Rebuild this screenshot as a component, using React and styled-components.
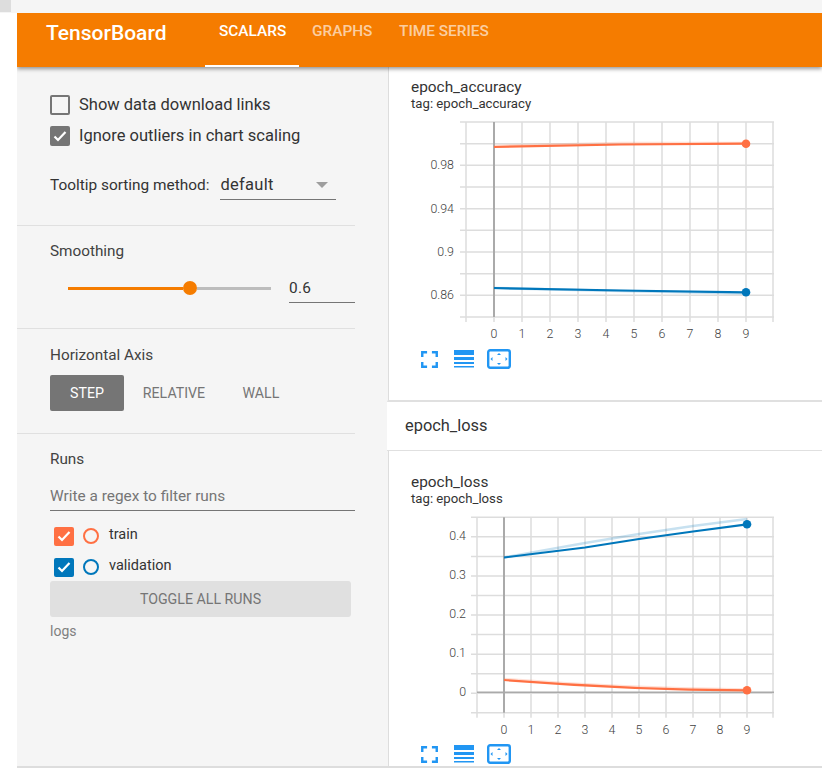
import React from 'react'
import styled, { createGlobalStyle } from 'styled-components'

const GlobalStyle = createGlobalStyle`
  html, body { margin: 0; padding: 0; background: #fff; overflow: hidden; }
  * { box-sizing: border-box; }
  body { font-family: Roboto, "Liberation Sans", sans-serif; color: #212121; }
`

const ORANGE = '#ff7043'
const BLUE = '#0077bb'
const ICON_BLUE = '#2196f3'

const Page = styled.div`
  width: 822px;
  height: 772px;
  overflow: hidden;
`
const TopStrip = styled.div`
  height: 13px;
  background: #f5f5f5;
`
const ScrollCorner = styled.div`
  width: 11px;
  height: 12px;
  background: #dddddd;
`
const Shell = styled.div`
  margin-left: 17px;
  height: 755px;
  border-bottom: 2px solid #dddddd;
  display: flex;
  flex-direction: column;
  overflow: hidden;
`
const Header = styled.header`
  position: relative;
  z-index: 2;
  flex: 0 0 54px;
  display: flex;
  background: #f57c00;
  box-shadow: 0 2px 4px rgba(0, 0, 0, 0.4);
`
const Logo = styled.div`
  width: 188px;
  padding-left: 29px;
  padding-top: 5px;
  line-height: 30px;
  font-size: 21px;
  font-weight: 500;
  color: #fff;
`
const Tab = styled.div`
  width: ${p => p.$width}px;
  height: 54px;
  padding: 9px 0 0 ${p => (p.$active ? 14 : 13)}px;
  line-height: 18px;
  font-size: 15.4px;
  font-weight: 500;
  color: ${p => (p.$active ? '#fff' : 'rgba(255, 255, 255, 0.65)')};
  border-bottom: 2px solid ${p => (p.$active ? '#fff' : 'transparent')};
`
const Main = styled.div`
  flex: 1;
  display: flex;
  min-height: 0;
`
const Sidebar = styled.aside`
  flex: 0 0 372px;
  background: #f5f5f5;
  border-right: 1px solid #dddddd;
  padding-right: 33px;
`
const Section = styled.section`
  height: ${p => p.$height}px;
  padding: ${p => p.$top}px 0 0 33px;
  border-bottom: ${p => (p.$last ? 'none' : '1px solid #e0e0e0')};
`
const CheckRow = styled.div`
  display: flex;
  align-items: center;
  height: 20px;
  margin-bottom: 11px;
  font-size: 16.5px;
  color: #333;
`
const CheckText = styled.span`
  padding-bottom: 2px;
`
const Box = styled.span`
  flex: 0 0 auto;
  width: 20px;
  height: 20px;
  margin-right: 9px;
  border-radius: 2px;
  display: flex;
  align-items: center;
  justify-content: center;
  background: ${p => p.$color || 'transparent'};
  border: ${p => (p.$color ? 'none' : '2px solid #757575')};
`
const SelectRow = styled.div`
  display: flex;
  align-items: center;
  margin-top: 22px;
  padding-top: 2px;
  height: 32px;
  font-size: 15.4px;
  color: #333;
`
const Select = styled.div`
  width: 116px;
  height: 30px;
  margin-left: 11px;
  display: flex;
  align-items: center;
  justify-content: space-between;
  padding-right: 8px;
  font-size: 16.5px;
  letter-spacing: 0.3px;
  border-bottom: 1px solid #757575;
`
const Caret = styled.span`
  width: 0;
  height: 0;
  border-left: 6px solid transparent;
  border-right: 6px solid transparent;
  border-top: 6px solid #9e9e9e;
`
const Label = styled.div`
  font-size: 15.3px;
  line-height: 18px;
  color: #424242;
`
const SliderRow = styled.div`
  display: flex;
  align-items: flex-start;
  margin-top: 10px;
`
const Slider = styled.div`
  margin: 11px 0 0 18px;
  width: 203px;
  height: 14px;
  display: flex;
  align-items: center;
`
const Filled = styled.div`
  width: 115px;
  height: 3px;
  background: #f57c00;
`
const Thumb = styled.div`
  width: 14px;
  height: 14px;
  border-radius: 50%;
  background: #f57c00;
`
const Rest = styled.div`
  flex: 1;
  height: 3px;
  background: #bdbdbd;
`
const SmoothValue = styled.div`
  width: 66px;
  height: 33px;
  margin-left: 18px;
  padding-top: 9px;
  line-height: 18px;
  font-size: 15.4px;
  letter-spacing: 0.3px;
  color: #333;
  border-bottom: 1px solid #757575;
`
const AxisButtons = styled.div`
  display: flex;
  margin-top: 11px;
`
const AxisButton = styled.div`
  width: ${p => p.$width}px;
  height: 36px;
  line-height: 36px;
  text-align: center;
  font-size: 14.2px;
  border-radius: 2px;
  color: ${p => (p.$active ? '#fff' : '#757575')};
  background: ${p => (p.$active ? '#757575' : 'transparent')};
`
const RegexFilter = styled.div`
  width: 305px;
  height: 32px;
  margin-top: 11px;
  padding-top: 8px;
  line-height: 18px;
  font-size: 15.4px;
  color: #757575;
  border-bottom: 1px solid #757575;
`
const RunRow = styled.div`
  display: flex;
  align-items: center;
  height: 20px;
  margin: ${p => p.$top}px 0 0 4px;
  font-size: 14.5px;
  color: #333;
`
const RunBox = styled(Box)`
  width: 20px;
  height: 19px;
`
const RunDot = styled.span`
  width: 16px;
  height: 16px;
  margin-right: 10px;
  border-radius: 50%;
  border: 2px solid ${p => p.$color};
`
const RunName = styled.span`
  padding-bottom: 3px;
`
const ToggleButton = styled.div`
  width: 301px;
  height: 36px;
  margin-top: 4px;
  line-height: 37px;
  text-align: center;
  font-size: 14.2px;
  color: #757575;
  background: #e0e0e0;
  border-radius: 3px;
`
const LogsLabel = styled.div`
  margin-top: 5px;
  line-height: 18px;
  font-size: 14px;
  color: #808080;
`
const Content = styled.main`
  flex: 1;
  min-width: 0;
  background: #fff;
`
const ChartCard = styled.div`
  height: ${p => p.$height}px;
  padding: ${p => p.$top}px 0 0 22px;
`
const ChartTitle = styled.div`
  line-height: 18px;
  font-size: 15.4px;
  color: #333;
`
const ChartTag = styled.div`
  line-height: 15px;
  font-size: 13.2px;
  color: #333;
`
const ChartSvg = styled.svg`
  display: block;
  margin-top: 7px;
`
const AxisLabel = styled.text`
  font-family: Roboto, "Liberation Sans", sans-serif;
  font-size: 12.4px;
  font-weight: 300;
  fill: #424242;
`
const IconRow = styled.div`
  display: flex;
  align-items: center;
  height: 24px;
  margin: 3px 0 0 4px;
`
const IconSlot = styled.span`
  display: flex;
  width: ${p => p.$width}px;
`
const CategoryHeader = styled.div`
  height: 51px;
  margin-left: -2px;
  padding-left: 18px;
  line-height: 47px;
  font-size: 16.4px;
  color: #333;
  background: #fff;
  border-top: 2px solid #e0e0e0;
  border-bottom: 1px solid #e0e0e0;
  border-top-left-radius: 2px;
`

const Tick = () => (
  <svg width="14" height="12" viewBox="0 0 14 12">
    <path d="M1.5 6.5 L5 10 L12.5 2" fill="none" stroke="#fff" strokeWidth="2.2" />
  </svg>
)

const FullscreenIcon = () => (
  <svg width="29" height="29" viewBox="0 0 24 24" fill={ICON_BLUE}>
    <path d="M7 14H5v5h5v-2H7v-3zm-2-4h2V7h3V5H5v5zm12 7h-3v2h5v-5h-2v3zM14 5v2h3v3h2V5h-5z" />
  </svg>
)

const LinesIcon = () => (
  <svg width="20" height="18" viewBox="0 0 20 18" fill={ICON_BLUE}>
    <rect x="0" y="0" width="20" height="5" />
    <rect x="0" y="7" width="20" height="3" />
    <rect x="0" y="12" width="20" height="2" />
    <rect x="0" y="16" width="20" height="1.5" />
  </svg>
)

const FitIcon = () => (
  <svg width="24" height="20" viewBox="0 0 24 20">
    <rect x="1.2" y="1.2" width="21.6" height="17.6" rx="2" fill="none" stroke={ICON_BLUE} strokeWidth="2.4" />
    <path d="M12 4 L14 6 H10 Z M12 16 L14 14 H10 Z M3.5 10 L5.500 8 V12 Z M20.500 10 L18.500 8 V12 Z" fill={ICON_BLUE} />
  </svg>
)

const ChartIcons = () => (
  <IconRow>
    <IconSlot $width={39}>
      <FullscreenIcon />
    </IconSlot>
    <IconSlot $width={33}>
      <LinesIcon />
    </IconSlot>
    <FitIcon />
  </IconRow>
)

// all coordinates below are in px inside the svg, data already scaled to the plot
const Chart = ({ vLines, hLines, axisX, zeroY, left, yLabels, labelRight, xLabelY, series }) => {
  const top = hLines[0]
  const bottom = hLines[hLines.length - 1]
  return (
    <ChartSvg width={411} height={226}>
      {hLines.map(y => (
        <line key={y} x1={left} x2={363} y1={y} y2={y} stroke="#dddddd" strokeWidth="1.5" />
      ))}
      {vLines.map(x => (
        <line key={x} x1={x} x2={x} y1={top} y2={bottom + 5} stroke="#dddddd" strokeWidth="1.5" />
      ))}
      {zeroY && <line x1={vLines[0]} x2={363} y1={zeroY} y2={zeroY} stroke="#aaaaaa" strokeWidth="1.5" />}
      <line x1={axisX} x2={axisX} y1={top} y2={bottom} stroke="#aaaaaa" strokeWidth="2" />
      {yLabels.map(l => (
        <AxisLabel key={l.text} x={labelRight} y={l.y + 3.5} textAnchor="end">
          {l.text}
        </AxisLabel>
      ))}
      {vLines.slice(1, 11).map((x, i) => (
        <AxisLabel key={x} x={x} y={xLabelY} textAnchor="middle">
          {i}
        </AxisLabel>
      ))}
      {series.map(s => (
        <g key={s.color}>
          <path d={s.raw} fill="none" stroke={s.color} strokeOpacity="0.22" strokeWidth="2.6" />
          <path d={s.smooth} fill="none" stroke={s.color} strokeWidth="2.2" />
          <circle cx={s.dot[0]} cy={s.dot[1]} r="4.3" fill={s.color} />
        </g>
      ))}
    </ChartSvg>
  )
}

const range = (start, step, count) => Array.from({ length: count }, (_, i) => start + step * i)

const accuracy = {
  left: 49,
  axisX: 83,
  vLines: [55, ...range(83, 28, 10), 362],
  hLines: range(4, 21.67, 10),
  yLabels: [
    { text: '0.98', y: 47 },
    { text: '0.94', y: 91 },
    { text: '0.9', y: 134 },
    { text: '0.86', y: 177 },
  ],
  labelRight: 43,
  xLabelY: 220,
  series: [
    { color: ORANGE, raw: 'M83 28 L210 25 L335 25', smooth: 'M83 29 L210 26.5 L335 25.7', dot: [335, 25.7] },
    { color: BLUE, raw: 'M83 170 L210 173 L335 175.5', smooth: 'M83 170 L210 172.5 L335 174.3', dot: [335, 174.3] },
  ],
}

const loss = {
  left: 60,
  axisX: 93,
  zeroY: 179.3,
  vLines: [66, ...range(93, 27, 10), 362],
  hLines: range(4.3, 19.55, 11),
  yLabels: [
    { text: '0.4', y: 23 },
    { text: '0.3', y: 62 },
    { text: '0.2', y: 101 },
    { text: '0.1', y: 140 },
    { text: '0', y: 179 },
  ],
  labelRight: 55,
  xLabelY: 221,
  series: [
    { color: BLUE, raw: 'M93 44.5 L174 30 L228 21 L282 13 L336 6', smooth: 'M93 44.5 L174 34.5 L228 26 L282 18.5 L336 11.3', dot: [336, 11.3] },
    { color: ORANGE, raw: 'M93 166 C 170 172, 255 176, 336 176.5', smooth: 'M93 167 C 170 173, 255 177, 336 177.3', dot: [336, 177.3] },
  ],
}

const App = () => (
  <Page>
    <GlobalStyle />
    <TopStrip>
      <ScrollCorner />
    </TopStrip>
    <Shell>
      <Header>
        <Logo>TensorBoard</Logo>
        <Tab $active $width={94}>SCALARS</Tab>
        <Tab $width={87}>GRAPHS</Tab>
        <Tab $width={120}>TIME SERIES</Tab>
      </Header>
      <Main>
        <Sidebar>
          <Section $height={159} $top={28}>
            <CheckRow>
              <Box />
              <CheckText>Show data download links</CheckText>
            </CheckRow>
            <CheckRow>
              <Box $color="#757575">
                <Tick />
              </Box>
              <CheckText>Ignore outliers in chart scaling</CheckText>
            </CheckRow>
            <SelectRow>
              Tooltip sorting method:
              <Select>
                default
                <Caret />
              </Select>
            </SelectRow>
          </Section>
          <Section $height={103} $top={16}>
            <Label>Smoothing</Label>
            <SliderRow>
              <Slider>
                <Filled />
                <Thumb />
                <Rest />
              </Slider>
              <SmoothValue>0.6</SmoothValue>
            </SliderRow>
          </Section>
          <Section $height={105} $top={17}>
            <Label>Horizontal Axis</Label>
            <AxisButtons>
              <AxisButton $active $width={74}>STEP</AxisButton>
              <AxisButton $width={100}>RELATIVE</AxisButton>
              <AxisButton $width={74}>WALL</AxisButton>
            </AxisButtons>
          </Section>
          <Section $last $height={300} $top={16}>
            <Label>Runs</Label>
            <RegexFilter>Write a regex to filter runs</RegexFilter>
            <RunRow $top={15}>
              <RunBox $color={ORANGE}>
                <Tick />
              </RunBox>
              <RunDot $color={ORANGE} />
              <RunName>train</RunName>
            </RunRow>
            <RunRow $top={11}>
              <RunBox $color={BLUE}>
                <Tick />
              </RunBox>
              <RunDot $color={BLUE} />
              <RunName>validation</RunName>
            </RunRow>
            <ToggleButton>TOGGLE ALL RUNS</ToggleButton>
            <LogsLabel>logs</LogsLabel>
          </Section>
        </Sidebar>
        <Content>
          <ChartCard $height={333} $top={11}>
            <ChartTitle>epoch_accuracy</ChartTitle>
            <ChartTag>tag: epoch_accuracy</ChartTag>
            <Chart {...accuracy} />
            <ChartIcons />
          </ChartCard>
          <CategoryHeader>epoch_loss</CategoryHeader>
          <ChartCard $height={315} $top={22}>
            <ChartTitle>epoch_loss</ChartTitle>
            <ChartTag>tag: epoch_loss</ChartTag>
            <Chart {...loss} />
            <ChartIcons />
          </ChartCard>
        </Content>
      </Main>
    </Shell>
  </Page>
)

export default App
